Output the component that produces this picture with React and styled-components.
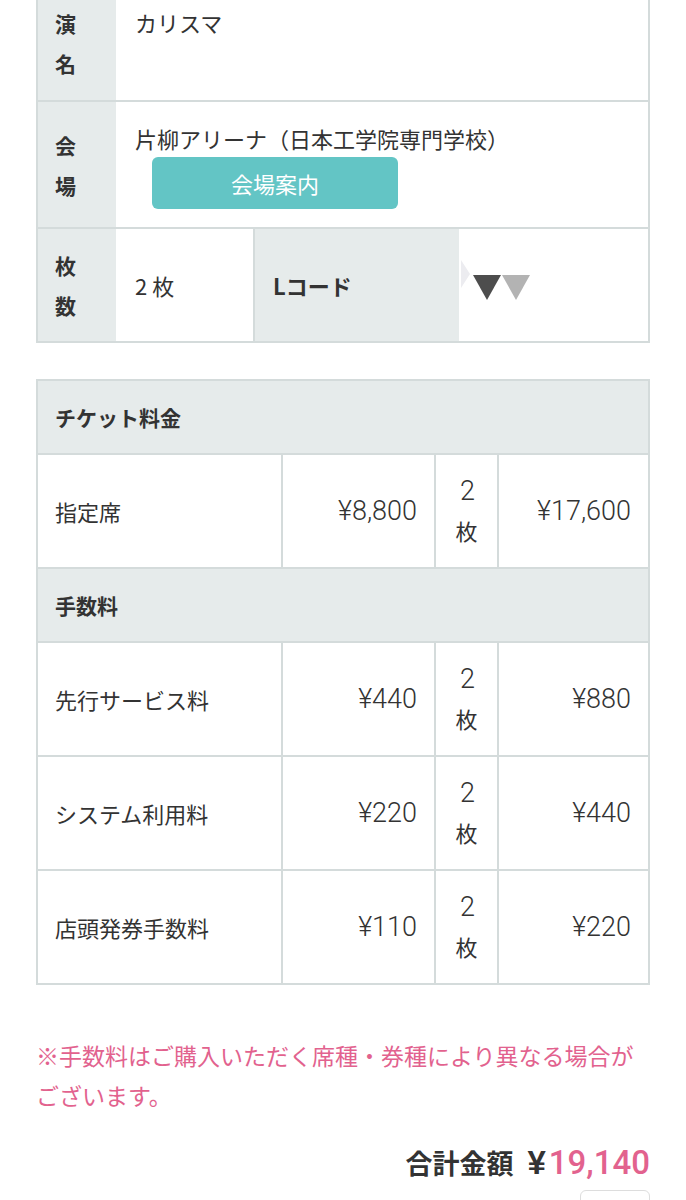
import React from 'react';
import styled, { createGlobalStyle } from 'styled-components';

const GlobalStyle = createGlobalStyle`
  body {
    margin: 0;
    background: #ffffff;
    color: #333333;
    font-family: "Noto Sans CJK JP", "Noto Sans", sans-serif;
  }
`;

const Page = styled.div`
  padding: 0 36px;
  margin-top: -14px;
  overflow: hidden;
  height: 1214px;
`;

const InfoTable = styled.div`
  border: 2px solid #d4dbdb;
  border-top: none;
`;

const InfoRow = styled.div`
  display: flex;
  min-height: ${(p) => p.$minHeight || 0}px;
  border-bottom: ${(p) => (p.$last ? 'none' : '2px solid #d4dbdb')};
`;

const Label = styled.div`
  flex: 0 0 78px;
  box-sizing: border-box;
  background: #e6ebeb;
  padding: 16px 0 16px 17px;
  display: flex;
  align-items: center;
`;

const LabelText = styled.span`
  width: 1.1em;
  font-size: 21px;
  font-weight: 700;
  line-height: 40px;
  word-break: break-all;
`;

const Value = styled.div`
  flex: ${(p) => (p.$width ? `0 0 ${p.$width}px` : '1')};
  box-sizing: border-box;
  padding: 16px 0 16px 19px;
  font-size: 22px;
  line-height: 40px;
  display: flex;
  flex-direction: column;
  justify-content: ${(p) => (p.$middle ? 'center' : 'flex-start')};
  align-items: flex-start;
  border-right: ${(p) => (p.$divider ? '2px solid #d4dbdb' : 'none')};
`;

const SubLabel = styled.div`
  flex: 0 0 204px;
  box-sizing: border-box;
  background: #e6ebeb;
  padding-left: 18px;
  display: flex;
  align-items: center;
  font-size: 22px;
  font-weight: 700;
`;

const CodeCell = styled.div`
  flex: 1;
  display: flex;
  align-items: center;
  padding-left: 2px;
`;

const GuideButton = styled.button`
  margin: -1px 0 2px 17px;
  width: 246px;
  height: 52px;
  border: none;
  border-radius: 6px;
  background: #63c5c5;
  color: #ffffff;
  font-family: inherit;
  font-size: 22px;
  cursor: pointer;
`;

const PriceTable = styled.div`
  margin-top: 36px;
  border: 2px solid #d4dbdb;
`;

const SectionHeader = styled.div`
  height: 74px;
  box-sizing: border-box;
  background: #e6ebeb;
  border-bottom: 2px solid #d4dbdb;
  padding-left: 17px;
  display: flex;
  align-items: center;
  font-size: 21px;
  font-weight: 700;
`;

const PriceRow = styled.div`
  display: grid;
  box-sizing: border-box;
  grid-template-columns: 245px 153px 63px 1fr;
  height: ${(p) => (p.$last ? 112 : 114)}px;
  border-bottom: ${(p) => (p.$last ? 'none' : '2px solid #d4dbdb')};
`;

const Cell = styled.div`
  box-sizing: border-box;
  display: flex;
  align-items: center;
  justify-content: ${(p) => (p.$right ? 'flex-end' : 'flex-start')};
  padding: ${(p) => (p.$right ? '0 17px 0 0' : '0 0 0 17px')};
  border-right: ${(p) => (p.$end ? 'none' : '2px solid #d4dbdb')};
  font-size: 22px;
`;

const Amount = styled.span`
  font-family: Roboto, "Liberation Sans", sans-serif;
  font-weight: 300;
  font-size: 27px;
  color: #333333;
`;

const QtyCell = styled.div`
  display: flex;
  flex-direction: column;
  align-items: center;
  justify-content: center;
  border-right: 2px solid #d4dbdb;
  line-height: 39px;
`;

const QtyNum = styled.span`
  font-family: Roboto, "Liberation Sans", sans-serif;
  font-weight: 300;
  font-size: 27px;
  padding-left: 2px;
`;

const QtyUnit = styled.span`
  font-size: 22px;
`;

const Note = styled.p`
  margin: 50px 0 0;
  color: #e2628e;
  font-size: 23px;
  line-height: 40px;
`;

const Total = styled.div`
  margin-top: 25px;
  display: flex;
  justify-content: flex-end;
  align-items: baseline;
  line-height: 46px;
`;

const TotalLabel = styled.span`
  font-size: 27px;
  font-weight: 700;
  color: #333333;
  margin-right: 14px;
`;

const Yen = styled.span`
  font-family: "Liberation Sans", sans-serif;
  font-size: 33px;
  font-weight: 700;
  color: #333333;
  margin-right: 3px;
`;

const TotalAmount = styled.span`
  font-family: Roboto, "Liberation Sans", sans-serif;
  font-size: 33px;
  font-weight: 500;
  color: #e2628e;
`;

const Footer = styled.div`
  display: flex;
  justify-content: flex-end;
  margin-top: 4px;
`;

const SmallBox = styled.div`
  width: 68px;
  height: 30px;
  border: 1px solid #dddddd;
  border-radius: 6px;
`;

const CodeMark = () => (
  <svg width="80" height="50" viewBox="0 0 80 50">
    <polygon points="0,0 9,14 0,28" fill="#ececf0" />
    <polygon points="12,15 40,15 26,40" fill="#4d4d4d" />
    <polygon points="41,15 69,15 55,40" fill="#b3b3b3" />
  </svg>
);

const priceRows = [
  { name: '指定席', unit: '¥8,800', total: '¥17,600', section: 'チケット料金' },
  { name: '先行サービス料', unit: '¥440', total: '¥880', section: '手数料' },
  { name: 'システム利用料', unit: '¥220', total: '¥440' },
  { name: '店頭発券手数料', unit: '¥110', total: '¥220', last: true },
];

export default function App() {
  return (
    <>
      <GlobalStyle />
      <Page>
        <InfoTable>
          <InfoRow $minHeight={114}>
            <Label><LabelText>演名</LabelText></Label>
            <Value>カリスマ</Value>
          </InfoRow>
          <InfoRow>
            <Label><LabelText>会場</LabelText></Label>
            <Value>
              片柳アリーナ（日本工学院専門学校）
              <GuideButton>会場案内</GuideButton>
            </Value>
          </InfoRow>
          <InfoRow $last>
            <Label><LabelText>枚数</LabelText></Label>
            <Value $width={139} $middle $divider>2 枚</Value>
            <SubLabel>Lコード</SubLabel>
            <CodeCell><CodeMark /></CodeCell>
          </InfoRow>
        </InfoTable>

        <PriceTable>
          {priceRows.map((row) => (
            <React.Fragment key={row.name}>
              {row.section && <SectionHeader>{row.section}</SectionHeader>}
              <PriceRow $last={row.last}>
                <Cell>{row.name}</Cell>
                <Cell $right><Amount>{row.unit}</Amount></Cell>
                <QtyCell>
                  <QtyNum>2</QtyNum>
                  <QtyUnit>枚</QtyUnit>
                </QtyCell>
                <Cell $right $end><Amount>{row.total}</Amount></Cell>
              </PriceRow>
            </React.Fragment>
          ))}
        </PriceTable>

        <Note>※手数料はご購入いただく席種・券種により異なる場合がございます。</Note>

        <Total>
          <TotalLabel>合計金額</TotalLabel>
          <Yen>¥</Yen>
          <TotalAmount>19,140</TotalAmount>
        </Total>
        <Footer><SmallBox /></Footer>
      </Page>
    </>
  );
}
